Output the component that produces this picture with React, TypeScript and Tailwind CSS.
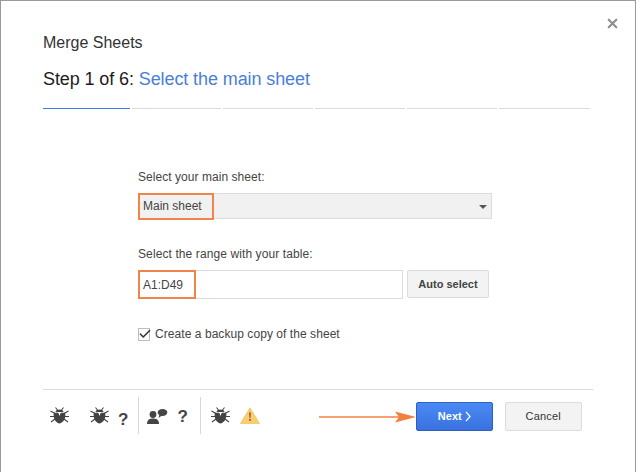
import { Check, X } from "lucide-react"

const font = "font-['Liberation_Sans',Arial,sans-serif]"

function BugIcon() {
  return (
    <svg width="19" height="17" viewBox="0 0 19 17" className="shrink-0">
      <g stroke="#444" strokeWidth="1.1" fill="none">
        <path d="M0.5 4 L5 6.5 M0 9.5 L5 9.5 M1 15 L5 12 M18.5 4 L14 6.5 M19 9.5 L14 9.5 M18 15 L14 12" />
        <path d="M5.5 0.5 L7.5 3 M13.5 0.5 L11.5 3" />
      </g>
      <path d="M5.5 5 C6 1.8 13 1.8 13.5 5 Z" fill="#444" />
      <path d="M3.8 5.8 L8.3 5.8 L9.5 9 L10.7 5.8 L15.2 5.8 C16 11 14 15.5 9.5 16.5 C5 15.5 3 11 3.8 5.8 Z" fill="#444" />
    </svg>
  )
}

function PersonChatIcon() {
  return (
    <svg width="21" height="15" viewBox="0 0 21 15" className="shrink-0">
      <circle cx="6" cy="5.5" r="3.4" fill="#444" />
      <path d="M0 15 C0 10.5 3 9.5 6 9.5 C9 9.5 12 10.5 12 15 Z" fill="#444" />
      <ellipse cx="15.5" cy="3.5" rx="4.8" ry="3.4" fill="#444" />
      <path d="M12.5 5.5 L11.5 9 L15 6.5 Z" fill="#444" />
    </svg>
  )
}

function WarningIcon() {
  return (
    <svg width="20" height="17" viewBox="0 0 20 17" className="shrink-0">
      <path d="M10 0.8 L19.5 16.5 L0.5 16.5 Z" fill="#f8ce73" stroke="#f5c360" strokeWidth="0.8" strokeLinejoin="round" />
      <path d="M9.1 5.5 L10.9 5.5 L10.5 11 L9.5 11 Z" fill="#a5483a" />
      <rect x="9.1" y="12" width="1.8" height="1.8" fill="#a5483a" />
    </svg>
  )
}

function ArrowIcon() {
  return (
    <svg width="97" height="12" viewBox="0 0 97 12" className="shrink-0">
      <path d="M0 6 L80 6" stroke="#f47f3f" strokeWidth="1.5" />
      <path d="M76 0.5 L97 6 L76 11.5 L80 6 Z" fill="#f47f3f" />
    </svg>
  )
}

function NextChevron() {
  return (
    <svg width="6" height="11" viewBox="0 0 6 11" className="shrink-0">
      <path d="M1 0.8 L5 5.5 L1 10.2" stroke="#fff" strokeWidth="1.3" fill="none" />
    </svg>
  )
}

const steps = [87, 89, 90, 90, 90, 91]

export default function App() {
  return (
    <div className={`${font} w-[636px] h-[472px] bg-white border-t border-x border-[#9a9a9a] pl-[42px] pr-[42px] flex flex-col relative overflow-hidden`}>
      <button className="absolute top-[15px] right-[15px] text-[#8f8f8f]">
        <X size={15} strokeWidth={3.5} />
      </button>

      <h1 className="mt-[33px] text-[16px] leading-[18px] text-[#333]">Merge Sheets</h1>
      <h2 className="mt-[16px] text-[18px] leading-[22px] text-[#1c1c1c] tracking-[-0.1px]">
        Step 1 of 6: <span className="text-[#4a7fd6]">Select the main sheet</span>
      </h2>

      <div className="mt-[18px] flex gap-[2px]">
        {steps.map((w, i) => (
          <div key={i} style={{ width: w }} className={i === 0 ? "h-px bg-[#3f7be0]" : "h-px bg-[#dcdcdc]"} />
        ))}
      </div>

      <div className="mt-[61px] ml-[95px] flex flex-col text-[12px] text-[#444]">
        <label className="leading-[14px] tracking-[0.05px]">Select your main sheet:</label>
        <div className="mt-[9px] w-[354px] h-[26px] bg-[#f1f1f1] border border-[#dcdcdc] flex items-center justify-between">
          <span className="-ml-px h-[27px] w-[76px] border-2 border-[#f0844a] flex items-center pl-[3px] text-[#444]">Main sheet</span>
          <span className="mr-[4px] mt-[2px] w-0 h-0 border-x-[4px] border-x-transparent border-t-[4px] border-t-[#555]" />
        </div>

        <label className="mt-[28px] leading-[14px] tracking-[0.1px]">Select the range with your table:</label>
        <div className="mt-[9px] flex gap-[4px]">
          <div className="w-[265px] h-[29px] bg-white border border-[#dcdcdc] flex items-center">
            <span className="-ml-px h-[29px] w-[58px] border-2 border-[#f0844a] flex items-center pl-[3px]">A1:D49</span>
          </div>
          <button className="w-[82px] h-[28px] bg-[#f3f3f3] border border-[#dcdcdc] rounded-[2px] text-[11px] font-bold text-[#444]">Auto select</button>
        </div>

        <label className="mt-[28px] flex items-center gap-[5px] leading-[14px] tracking-[0.06px]">
          <span className="w-[12px] h-[13px] border border-[#bdbdbd] bg-white relative shrink-0">
            <Check size={14} strokeWidth={2.5} className="absolute -top-[2px] -left-px text-[#333]" />
          </span>
          Create a backup copy of the sheet
        </label>
      </div>

      <div className="mt-[48px] w-[550px] h-px bg-[#dcdcdc]" />

      <div className="flex items-start mt-[7px]">
        <div className="flex items-start h-[37px]">
          <div className="mt-[10px] ml-[7px]"><BugIcon /></div>
          <div className="mt-[10px] ml-[21px]"><BugIcon /></div>
          <span className="mt-[13px] ml-[9px] text-[17px] leading-[19px] font-bold text-[#444]">?</span>
          <div className="ml-[10px] w-px h-[37px] bg-[#d8d8d8]" />
          <div className="mt-[12px] ml-[8px]"><PersonChatIcon /></div>
          <span className="mt-[10px] ml-[9px] text-[17px] leading-[19px] font-bold text-[#444]">?</span>
          <div className="ml-[12px] w-px h-[37px] bg-[#d8d8d8]" />
          <div className="mt-[10px] ml-[10px]"><BugIcon /></div>
          <div className="mt-[10px] ml-[10px]"><WarningIcon /></div>
        </div>

        <div className="flex items-center ml-[59px] mt-[5px] h-[29px]">
          <ArrowIcon />
          <button className="w-[77px] h-[29px] rounded-[2px] border border-[#2f5fc0] bg-gradient-to-b from-[#4a8af4] to-[#3a72e0] text-white text-[11px] font-bold flex items-center justify-center gap-[3px]">
            Next <NextChevron />
          </button>
          <button className="ml-[12px] w-[77px] h-[29px] rounded-[2px] border border-[#dcdcdc] bg-[#f3f3f3] text-[11px] text-[#333] font-normal tracking-[0.2px]">Cancel</button>
        </div>
      </div>
    </div>
  )
}
